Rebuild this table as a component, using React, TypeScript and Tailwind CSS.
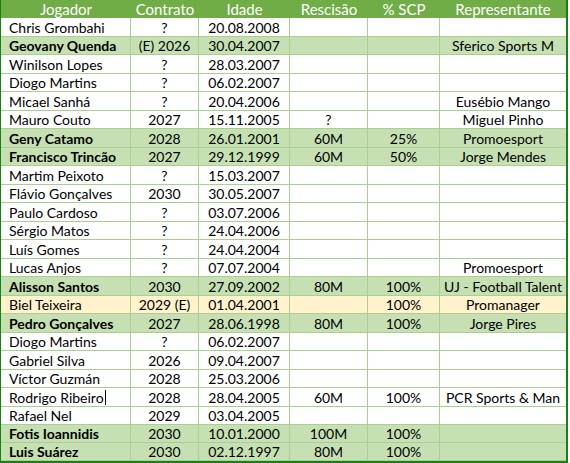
type Row = {
  name: string;
  contrato: string;
  idade: string;
  rescisao?: string;
  scp?: string;
  rep?: string;
  tone?: "green" | "yellow";
  cursor?: boolean;
};

const rows: Row[] = [
  { name: "Chris Grombahi", contrato: "?", idade: "20.08.2008" },
  { name: "Geovany Quenda", contrato: "(E) 2026", idade: "30.04.2007", rep: "Sferico Sports M", tone: "green" },
  { name: "Winilson Lopes", contrato: "?", idade: "28.03.2007" },
  { name: "Diogo Martins", contrato: "?", idade: "06.02.2007" },
  { name: "Micael Sanhá", contrato: "?", idade: "20.04.2006", rep: "Eusébio Mango" },
  { name: "Mauro Couto", contrato: "2027", idade: "15.11.2005", rescisao: "?", rep: "Miguel Pinho" },
  { name: "Geny Catamo", contrato: "2028", idade: "26.01.2001", rescisao: "60M", scp: "25%", rep: "Promoesport", tone: "green" },
  { name: "Francisco Trincão", contrato: "2027", idade: "29.12.1999", rescisao: "60M", scp: "50%", rep: "Jorge Mendes", tone: "green" },
  { name: "Martim Peixoto", contrato: "?", idade: "15.03.2007" },
  { name: "Flávio Gonçalves", contrato: "2030", idade: "30.05.2007" },
  { name: "Paulo Cardoso", contrato: "?", idade: "03.07.2006" },
  { name: "Sérgio Matos", contrato: "?", idade: "24.04.2006" },
  { name: "Luís Gomes", contrato: "?", idade: "24.04.2004" },
  { name: "Lucas Anjos", contrato: "?", idade: "07.07.2004", rep: "Promoesport" },
  { name: "Alisson Santos", contrato: "2030", idade: "27.09.2002", rescisao: "80M", scp: "100%", rep: "UJ - Football Talent", tone: "green" },
  { name: "Biel Teixeira", contrato: "2029 (E)", idade: "01.04.2001", scp: "100%", rep: "Promanager", tone: "yellow" },
  { name: "Pedro Gonçalves", contrato: "2027", idade: "28.06.1998", rescisao: "80M", scp: "100%", rep: "Jorge Pires", tone: "green" },
  { name: "Diogo Martins", contrato: "?", idade: "06.02.2007" },
  { name: "Gabriel Silva", contrato: "2026", idade: "09.04.2007" },
  { name: "Víctor Guzmán", contrato: "2028", idade: "25.03.2006" },
  { name: "Rodrigo Ribeiro", contrato: "2028", idade: "28.04.2005", rescisao: "60M", scp: "100%", rep: "PCR Sports & Man", cursor: true },
  { name: "Rafael Nel", contrato: "2029", idade: "03.04.2005" },
  { name: "Fotis Ioannidis", contrato: "2030", idade: "10.01.2000", rescisao: "100M", scp: "100%", tone: "green" },
  { name: "Luis Suárez", contrato: "2030", idade: "02.12.1997", rescisao: "80M", scp: "100%", tone: "green" },
];

const cols = "grid grid-cols-[130px_68px_91px_78px_72px_126px]";
const cell = "flex items-center justify-center pt-px border-r border-b border-[#a9d08e] whitespace-nowrap overflow-hidden";

export default function App() {
  return (
    <div className="w-[570px] h-[463px] bg-white font-['Lato',sans-serif] text-[14px] text-black">
      <div className="w-[568px] border-l border-r-2 border-b-2 border-[#178017]">
        <div className={`${cols} h-[18px] bg-[#70ad47] text-[15px] text-white`}>
          {["Jogador", "Contrato", "Idade", "Rescisão", "% SCP", "Representante"].map((h) => (
            <div key={h} className="flex items-center justify-center leading-none">
              {h}
            </div>
          ))}
        </div>
        {rows.map((r, i) => {
          const bg =
            r.tone === "green" ? "bg-[#c6e0b4]" : r.tone === "yellow" ? "bg-[#fff2cc]" : "bg-white";
          const h = i % 2 === 0 && i < 22 ? "h-[19px]" : "h-[18px]";
          return (
            <div key={i} className={`${cols} ${h} ${bg} leading-none`}>
              <div className={`${cell} justify-start pl-[8px] ${r.tone === "green" ? "font-bold" : ""}`}>
                {r.name}
                {r.cursor && <span className="ml-px inline-block h-[15px] w-px bg-black" />}
              </div>
              <div className={cell}>{r.contrato}</div>
              <div className={cell}>{r.idade}</div>
              <div className={cell}>{r.rescisao}</div>
              <div className={cell}>{r.scp}</div>
              <div className={`${cell} border-r-0`}>{r.rep}</div>
            </div>
          );
        })}
      </div>
    </div>
  );
}
